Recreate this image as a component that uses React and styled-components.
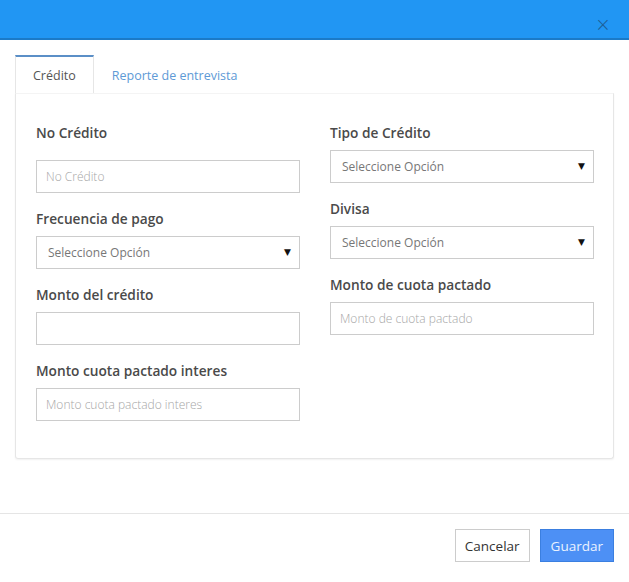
import styled, { createGlobalStyle } from 'styled-components'

const GlobalStyle = createGlobalStyle`
  html, body {
    margin: 0;
    padding: 0;
    background: #ffffff;
    font-family: 'Open Sans', 'Liberation Sans', sans-serif;
  }
  * {
    box-sizing: border-box;
  }
`

const Modal = styled.div`
  width: 629px;
  height: 582px;
  background: #ffffff;
  display: flex;
  flex-direction: column;
`

const Header = styled.header`
  height: 40px;
  background-color: #2196f3;
  border-bottom: 2px solid #1b7ac7;
  display: flex;
  justify-content: flex-end;
  align-items: flex-end;
  padding: 0 18px 4px 0;
`

const Close = styled.button`
  border: none;
  background: transparent;
  color: #1e5d93;
  font-size: 19px;
  line-height: 20px;
  padding: 0;
  cursor: pointer;
  font-family: 'DejaVu Sans', sans-serif;
  font-weight: 300;
`

const Body = styled.div`
  padding: 15px 15px 54px;
`

const Tabs = styled.ul`
  display: flex;
  list-style: none;
  margin: 0;
  padding: 0;
  height: 38px;
`

const Tab = styled.li`
  height: 38px;
  display: flex;
  align-items: center;
  font-size: 12.5px;
  padding: 0 17px;
  color: ${p => (p.active ? '#555555' : '#5e9ad6')};
  border-top: 2px solid ${p => (p.active ? '#5b8fc7' : 'transparent')};
  border-left: 1px solid ${p => (p.active ? '#e6e6e6' : 'transparent')};
  border-right: 1px solid ${p => (p.active ? '#e6e6e6' : 'transparent')};
  background: #ffffff;
  cursor: pointer;
`

const Panel = styled.div`
  border: 1px solid #e6e6e6;
  border-top-color: #f4f4f4;
  border-radius: 0 0 3px 3px;
  box-shadow: 0 1px 2px rgba(0, 0, 0, 0.06);
  padding: 29px 19px 21px 20px;
  display: grid;
  grid-template-columns: 264px 264px;
  column-gap: 30px;
  align-items: start;
`

const Column = styled.div`
  display: flex;
  flex-direction: column;
`

const Field = styled.div`
  display: flex;
  flex-direction: column;
  margin-bottom: 16px;
`

const Label = styled.label`
  font-size: 13.7px;
  font-weight: 600;
  color: #4a4a4a;
  line-height: 20px;
  margin-bottom: ${p => (p.spaced ? '17px' : '7px')};
`

const Input = styled.input`
  height: 33px;
  width: 100%;
  border: 1px solid #cccccc;
  padding: 0 9px;
  font-size: 12px;
  font-family: 'Open Sans', 'Liberation Sans', sans-serif;
  color: #555555;
  outline: none;

  &::placeholder {
    color: #a6a6a6;
    font-weight: 300;
  }
`

const SelectWrap = styled.div`
  position: relative;
  height: 33px;
`

const Select = styled.select`
  appearance: none;
  -webkit-appearance: none;
  width: 100%;
  height: 33px;
  border: 1px solid #cccccc;
  border-radius: 0;
  background: #ffffff;
  padding: 0 11px;
  font-size: 12px;
  font-family: 'Open Sans', 'Liberation Sans', sans-serif;
  color: #777777;
  outline: none;
`

const Caret = styled.span`
  position: absolute;
  right: 9px;
  top: 11px;
  font-size: 9px;
  line-height: 10px;
  color: #111111;
  pointer-events: none;
  font-family: 'DejaVu Sans', sans-serif;
`

const Footer = styled.footer`
  border-top: 1px solid #e5e5e5;
  padding: 15px 15px 0;
  display: flex;
  justify-content: flex-end;
  gap: 10px;
`

const Button = styled.button`
  height: 33px;
  padding: 0 ${p => (p.primary ? '10px' : '9px')};
  font-size: 13.5px;
  font-family: 'Open Sans', 'Liberation Sans', sans-serif;
  border: 1px solid ${p => (p.primary ? '#3b7fe0' : '#cccccc')};
  background: ${p => (p.primary ? '#4d90f5' : '#ffffff')};
  color: ${p => (p.primary ? '#eaf2ff' : '#333333')};
  cursor: pointer;
`

function TextField({ label, placeholder, spaced }) {
  return (
    <Field>
      <Label spaced={spaced}>{label}</Label>
      <Input placeholder={placeholder} />
    </Field>
  )
}

function SelectField({ label }) {
  return (
    <Field>
      <Label>{label}</Label>
      <SelectWrap>
        <Select defaultValue=''>
          <option value=''>Seleccione Opción</option>
        </Select>
        <Caret>▼</Caret>
      </SelectWrap>
    </Field>
  )
}

export default function App() {
  return (
    <Modal>
      <GlobalStyle />
      <Header>
        <Close>×</Close>
      </Header>
      <Body>
        <Tabs>
          <Tab active>Crédito</Tab>
          <Tab>Reporte de entrevista</Tab>
        </Tabs>
        <Panel>
          <Column>
            <TextField label='No Crédito' placeholder='No Crédito' spaced />
            <SelectField label='Frecuencia de pago' />
            <TextField label='Monto del crédito' placeholder='' />
            <TextField label='Monto cuota pactado interes' placeholder='Monto cuota pactado interes' />
          </Column>
          <Column>
            <SelectField label='Tipo de Crédito' />
            <SelectField label='Divisa' />
            <TextField label='Monto de cuota pactado' placeholder='Monto de cuota pactado' />
          </Column>
        </Panel>
      </Body>
      <Footer>
        <Button>Cancelar</Button>
        <Button primary>Guardar</Button>
      </Footer>
    </Modal>
  )
}
